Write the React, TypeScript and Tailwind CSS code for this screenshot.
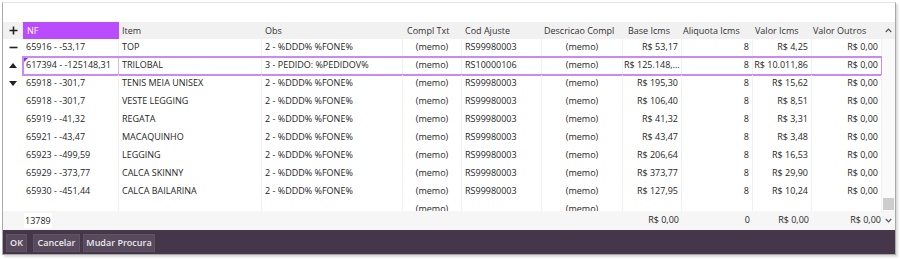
import React from 'react';

type Col = {
  key: string;
  label: string;
  width: string;
  align: 'left' | 'center' | 'right';
  headPad?: string;
};

const cols: Col[] = [
  { key: 'nf', label: 'NF', width: 'w-[96px]', align: 'left' },
  { key: 'item', label: 'Item', width: 'w-[143px]', align: 'left' },
  { key: 'obs', label: 'Obs', width: 'w-[141px]', align: 'left' },
  { key: 'compl', label: 'Compl Txt', width: 'w-[59px]', align: 'center', headPad: 'pl-[4px]' },
  { key: 'cod', label: 'Cod Ajuste', width: 'w-[80px]', align: 'left' },
  { key: 'desc', label: 'Descricao Compl', width: 'w-[81px]', align: 'center', headPad: 'pl-[2px]' },
  { key: 'base', label: 'Base Icms', width: 'w-[59px]', align: 'right', headPad: 'pl-[5px]' },
  { key: 'aliq', label: 'Aliquota Icms', width: 'w-[71px]', align: 'right', headPad: 'pl-[1px]' },
  { key: 'vicms', label: 'Valor Icms', width: 'w-[59px]', align: 'right', headPad: 'pl-[2px]' },
  { key: 'vout', label: 'Valor Outros', width: 'w-[70px]', align: 'right', headPad: 'pl-[1px]' },
];

type Row = Record<string, string>;

const mk = (nf: string, item: string, obs: string, cod: string, base: string, vicms: string): Row => ({
  nf,
  item,
  obs,
  compl: '(memo)',
  cod,
  desc: '(memo)',
  base,
  aliq: '8',
  vicms,
  vout: 'R$ 0,00',
});

const rows: Row[] = [
  mk('65916 - -53,17', 'TOP', '2 - %DDD% %FONE%', 'RS99980003', 'R$ 53,17', 'R$ 4,25'),
  mk('617394 - -125148,31', 'TRILOBAL', '3 - PEDIDO: %PEDIDOV%', 'RS10000106', 'R$ 125.148,...', 'R$ 10.011,86'),
  mk('65918 - -301,7', 'TENIS MEIA UNISEX', '2 - %DDD% %FONE%', 'RS99980003', 'R$ 195,30', 'R$ 15,62'),
  mk('65918 - -301,7', 'VESTE LEGGING', '2 - %DDD% %FONE%', 'RS99980003', 'R$ 106,40', 'R$ 8,51'),
  mk('65919 - -41,32', 'REGATA', '2 - %DDD% %FONE%', 'RS99980003', 'R$ 41,32', 'R$ 3,31'),
  mk('65921 - -43,47', 'MACAQUINHO', '2 - %DDD% %FONE%', 'RS99980003', 'R$ 43,47', 'R$ 3,48'),
  mk('65923 - -499,59', 'LEGGING', '2 - %DDD% %FONE%', 'RS99980003', 'R$ 206,64', 'R$ 16,53'),
  mk('65929 - -373,77', 'CALCA SKINNY', '2 - %DDD% %FONE%', 'RS99980003', 'R$ 373,77', 'R$ 29,90'),
  mk('65930 - -451,44', 'CALCA BAILARINA', '2 - %DDD% %FONE%', 'RS99980003', 'R$ 127,95', 'R$ 10,24'),
  { nf: '', item: '', obs: '', compl: '(memo)', cod: '', desc: '(memo)', base: '', aliq: '', vicms: '', vout: '' },
];

const footer: Row = { nf: '13789', base: 'R$ 0,00', aliq: '0', vicms: 'R$ 0,00', vout: 'R$ 0,00' };

const alignClass = (a: Col['align']) =>
  a === 'left' ? 'justify-start pl-[3px]' : a === 'center' ? 'justify-center' : 'justify-end pr-[3px]';

const NavIcon: React.FC<{ kind: string }> = ({ kind }) => {
  if (kind === 'plus')
    return (
      <svg width="9" height="9" viewBox="0 0 9 9">
        <path d="M0.5 4.5h8M4.5 0.5v8" stroke="#222" strokeWidth="1.6" />
      </svg>
    );
  if (kind === 'minus')
    return (
      <svg width="9" height="9" viewBox="0 0 9 9">
        <path d="M0.5 4.5h8" stroke="#222" strokeWidth="1.6" />
      </svg>
    );
  if (kind === 'up')
    return (
      <svg width="8" height="5" viewBox="0 0 8 5">
        <path d="M0 5L4 0L8 5Z" fill="#222" />
      </svg>
    );
  if (kind === 'down')
    return (
      <svg width="8" height="5" viewBox="0 0 8 5">
        <path d="M0 0L8 0L4 5Z" fill="#222" />
      </svg>
    );
  return null;
};

const navFor = ['minus', 'up', 'down'];

const App: React.FC = () => {
  return (
    <div
      className="w-[900px] h-[259px] bg-white pt-[2px] text-[#262626] text-[9px]"
      style={{ fontFamily: '"Open Sans", "Noto Sans", sans-serif' }}
    >
      <div className="ml-[2px] w-[894px] h-[253px] border border-[#a9a9a9] border-t-[#e4e4e4] shadow-[2px_2px_2px_rgba(0,0,0,0.15)] flex flex-col">
        {/* grid area */}
        <div className="flex-1 flex flex-col bg-white overflow-hidden">
          <div className="h-[19px] shrink-0" />
          <div className="flex flex-1 overflow-hidden">
            <div className="flex-1 flex flex-col overflow-hidden">
              {/* header */}
              <div className="flex h-[17px] shrink-0 bg-[#f1f1f1]">
                <div className="w-[20px] flex items-center justify-center">
                  <NavIcon kind="plus" />
                </div>
                {cols.map((c) => (
                  <div
                    key={c.key}
                    className={`${c.width} flex items-center whitespace-nowrap overflow-hidden ${
                      c.key === 'nf' ? 'bg-[#b94cff] text-white pl-[4px]' : `text-[#333] ${c.headPad ?? 'pl-[3px]'}`
                    }`}
                  >
                    {c.label}
                  </div>
                ))}
              </div>
              {/* rows */}
              <div className="flex-1 overflow-hidden">
                {rows.map((r, i) => (
                  <div key={i} className="flex h-[18px]">
                    <div className="w-[20px] flex items-center justify-center pb-[2px]">
                      {navFor[i] && <NavIcon kind={navFor[i]} />}
                    </div>
                    <div
                      className={`relative flex ${
                        i === 1 ? 'outline-2 outline-[#c98af7] -outline-offset-1' : ''
                      }`}
                    >
                      {i === 1 && (
                        <div className="absolute left-[1px] top-[1px] w-0 h-0 border-t-[4px] border-r-[4px] border-t-[#8d2fe0] border-r-transparent" />
                      )}
                      {cols.map((c) => (
                        <div
                          key={c.key}
                          className={`${c.width} flex items-start pt-[1px] leading-[13px] whitespace-nowrap overflow-hidden border-r ${
                            i === 1 && c.key === 'nf' ? 'border-[#dcb8f8]' : 'border-[#f1f1f1]'
                          } ${
                            i === 1 && c.key === 'base' ? 'justify-start pl-[1px]' : alignClass(c.align)
                          }`}
                        >
                          {r[c.key]}
                        </div>
                      ))}
                    </div>
                  </div>
                ))}
              </div>
              {/* footer */}
              <div className="flex h-[19px] shrink-0 bg-[#f6f6f6] pb-[1px]">
                <div className="w-[20px]" />
                {cols.map((c) => (
                  <div
                    key={c.key}
                    className={`${c.width} flex items-center whitespace-nowrap ${
                      c.key === 'vout' ? 'justify-end pr-[1px]' : alignClass(c.align)
                    }`}
                  >
                    {c.key === 'nf' ? (
                      <span className="bg-white h-[15px] leading-[15px] px-[1px] -ml-[2px]">{footer.nf}</span>
                    ) : (
                      footer[c.key] ?? ''
                    )}
                  </div>
                ))}
              </div>
            </div>
            {/* scrollbar */}
            <div className="w-[13px] flex flex-col">
              <div className="h-[17px] bg-[#f1f1f1] flex items-center justify-center">
                <svg width="7" height="5" viewBox="0 0 7 5">
                  <path d="M0.8 4L3.5 1.2L6.2 4" stroke="#555" strokeWidth="1.2" fill="none" />
                </svg>
              </div>
              <div className="flex-1 flex flex-col justify-end bg-[#fafafa]">
                <div className="h-[12px] mx-[1px] mb-[1px] bg-[#cdcdcd]" />
              </div>
              <div className="h-[19px] bg-[#f6f6f6] flex items-center justify-center">
                <svg width="7" height="5" viewBox="0 0 7 5">
                  <path d="M0.8 1L3.5 3.8L6.2 1" stroke="#555" strokeWidth="1.2" fill="none" />
                </svg>
              </div>
            </div>
          </div>
        </div>
        {/* toolbar */}
        <div className="h-[24px] shrink-0 bg-[#45364a] flex items-start pt-[4px] pl-[3px] text-[9px] font-semibold text-[#ece8ee] whitespace-nowrap">
          <button className="h-[18px] w-[21px] bg-[#574a5c] border border-[#5f5364] flex items-center justify-center">
            OK
          </button>
          <button className="ml-[6px] h-[18px] w-[47px] bg-[#574a5c] border border-[#5f5364] flex items-center justify-center">
            Cancelar
          </button>
          <button className="ml-[3px] h-[18px] w-[72px] bg-[#574a5c] border border-[#5f5364] flex items-center justify-center">
            Mudar Procura
          </button>
        </div>
      </div>
    </div>
  );
};

export default App;
